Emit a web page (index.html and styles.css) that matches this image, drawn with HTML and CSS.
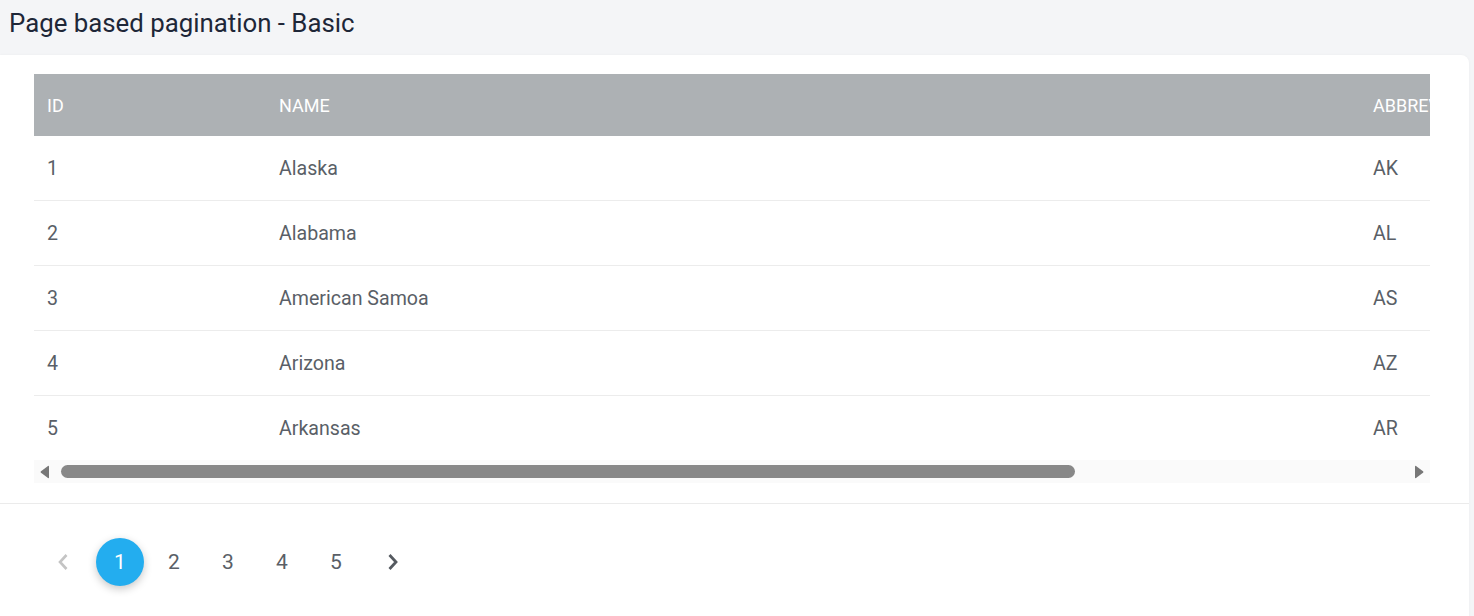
FILE: index.html
```html
<!DOCTYPE html>
<html>
<head>
<meta charset="utf-8">
<link rel="stylesheet" href="styles.css">
</head>
<body>
<div class="page">
  <h1 class="title">Page based pagination - Basic</h1>
  <div class="card">
    <div class="table-area">
      <div class="table-clip">
        <table class="grid">
          <colgroup>
            <col class="c-id"><col class="c-name"><col class="c-abbr">
          </colgroup>
          <thead>
            <tr><th>ID</th><th>NAME</th><th>ABBREVIATION</th></tr>
          </thead>
          <tbody>
            <tr><td>1</td><td>Alaska</td><td>AK</td></tr>
            <tr><td>2</td><td>Alabama</td><td>AL</td></tr>
            <tr><td>3</td><td>American Samoa</td><td>AS</td></tr>
            <tr><td>4</td><td>Arizona</td><td>AZ</td></tr>
            <tr><td>5</td><td>Arkansas</td><td>AR</td></tr>
          </tbody>
        </table>
      </div>
      <div class="hscroll">
        <svg class="sarrow" width="12" height="14" viewBox="0 0 12 14"><path d="M10 1.5 L10 12.5 Q10 13.5 9 13 L2 7.8 Q1 7 2 6.2 L9 1 Q10 0.5 10 1.5 Z" fill="#777"/></svg>
        <div class="track"><div class="thumb"></div></div>
        <svg class="sarrow" width="12" height="14" viewBox="0 0 12 14"><path d="M2 1.5 L2 12.5 Q2 13.5 3 13 L10 7.8 Q11 7 10 6.2 L3 1 Q2 0.5 2 1.5 Z" fill="#777"/></svg>
      </div>
    </div>
    <div class="pager">
      <span class="nav nav-prev">
        <svg width="14" height="20" viewBox="0 0 14 20"><path d="M10.5 3 L4 10 L10.5 17" fill="none" stroke="currentColor" stroke-width="2.6"/></svg>
      </span>
      <span class="pg active">1</span>
      <span class="pg">2</span>
      <span class="pg">3</span>
      <span class="pg">4</span>
      <span class="pg">5</span>
      <span class="nav nav-next">
        <svg width="14" height="20" viewBox="0 0 14 20"><path d="M3.5 3 L10 10 L3.5 17" fill="none" stroke="currentColor" stroke-width="2.8"/></svg>
      </span>
    </div>
  </div>
</div>
</body>
</html>
```

FILE: styles.css
```css
html, body {
  margin: 0;
  padding: 0;
  background: #f4f5f7;
  font-family: Roboto, "Liberation Sans", sans-serif;
}
.page {
  width: 1474px;
  height: 616px;
  overflow: hidden;
}
.title {
  margin: 0;
  height: 55px;
  box-sizing: border-box;
  padding: 6px 0 0 9px;
  font-size: 25.8px;
  font-weight: 400;
  color: #1e2738;
  line-height: 34px;
}
.card {
  background: #fff;
  margin-right: 5px;
  border-radius: 0 8px 0 0;
  height: 600px;
  box-shadow: 0 0 3px rgba(0,0,0,0.04);
}
.table-area {
  padding: 19px 0 20px 34px;
  border-bottom: 1px solid #ebebeb;
}
.table-clip {
  width: 1396px;
  overflow: hidden;
}
.grid {
  border-collapse: collapse;
  width: 1880px;
  table-layout: fixed;
}
.c-id { width: 232px; }
.c-name { width: 1094px; }
.c-abbr { width: 554px; }
.grid th {
  background: #adb1b4;
  color: #fff;
  font-weight: 400;
  font-size: 18px;
  text-align: left;
  height: 62px;
  padding: 0 0 0 13px;
  white-space: nowrap;
}
.grid td {
  font-size: 19.6px;
  color: #5a5f67;
  height: 64px;
  padding: 0 0 0 13px;
  border-bottom: 1px solid #ececec;
}
.grid tbody tr:last-child td {
  border-bottom: none;
}
.hscroll {
  width: 1396px;
  height: 23px;
  background: #fafafa;
  display: flex;
  align-items: center;
}
.sarrow {
  display: block;
  margin: 0 5px;
}
.track {
  flex: 1;
  margin: 0 5px 0 5px;
  height: 13px;
}
.thumb {
  width: 1014px;
  height: 13px;
  border-radius: 7px;
  background: #888;
}
.pager {
  display: flex;
  align-items: center;
  padding: 34px 0 0 45px;
}
.pg, .nav {
  width: 54px;
  height: 48px;
  display: flex;
  align-items: center;
  justify-content: center;
  font-size: 21px;
  color: #5a5f67;
}
.pg.active {
  width: 48px;
  margin: 0 3px 0 15px;
  border-radius: 50%;
  background: #23adef;
  color: #fff;
  box-shadow: 0 3px 8px rgba(0,0,0,0.22);
}
.nav-prev { color: #c4c4c4; width: 36px; }
.nav-next { color: #555a60; margin-left: 3px; }
```
